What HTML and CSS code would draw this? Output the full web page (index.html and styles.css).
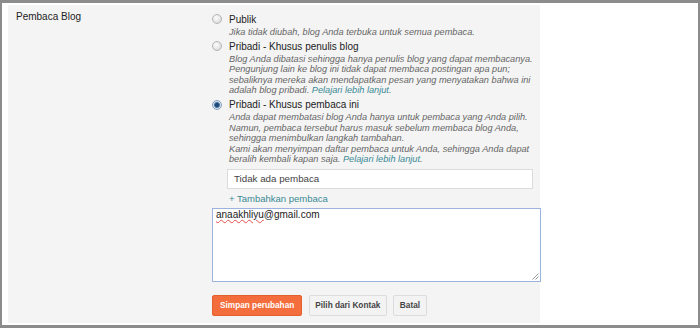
FILE: index.html
```html
<!DOCTYPE html>
<html lang="id">
<head>
<meta charset="utf-8">
<title>Pembaca Blog</title>
<link rel="stylesheet" href="styles.css">
</head>
<body>
<div class="frame">
  <div class="panel">
    <div class="field-label">Pembaca Blog</div>
    <div class="field-body">
      <div class="option">
        <span class="radio"></span>
        <div class="opt-text">
          <div class="opt-title">Publik</div>
          <div class="opt-desc">Jika tidak diubah, blog Anda terbuka untuk semua pembaca.</div>
        </div>
      </div>
      <div class="option">
        <span class="radio"></span>
        <div class="opt-text">
          <div class="opt-title">Pribadi - Khusus penulis blog</div>
          <div class="opt-desc">Blog Anda dibatasi sehingga hanya penulis blog yang dapat membacanya.<br>Pengunjung lain ke blog ini tidak dapat membaca postingan apa pun;<br>sebaliknya mereka akan mendapatkan pesan yang menyatakan bahwa ini<br>adalah blog pribadi. <a class="link" href="#">Pelajari lebih lanjut</a>.</div>
        </div>
      </div>
      <div class="option">
        <span class="radio checked"></span>
        <div class="opt-text">
          <div class="opt-title">Pribadi - Khusus pembaca ini</div>
          <div class="opt-desc">Anda dapat membatasi blog Anda hanya untuk pembaca yang Anda pilih.<br>Namun, pembaca tersebut harus masuk sebelum membaca blog Anda,<br>sehingga menimbulkan langkah tambahan.<br>Kami akan menyimpan daftar pembaca untuk Anda, sehingga Anda dapat<br>beralih kembali kapan saja. <a class="link" href="#">Pelajari lebih lanjut</a>.</div>
        </div>
      </div>
      <div class="picker">
        <div class="reader-box">Tidak ada pembaca</div>
        <a class="add-link" href="#">+ Tambahkan pembaca</a>
      </div>
      <div class="textarea"><span class="misspelled">anaakhliyu</span>@gmail.com<svg class="grip" width="7" height="7" viewBox="0 0 7 7"><path d="M6.5 0.5 L0.5 6.5 M6.5 3.5 L3.5 6.5" stroke="#9a9a9a" stroke-width="1" fill="none"/></svg></div>
      <div class="actions">
        <button class="btn btn-primary" type="button">Simpan perubahan</button>
        <button class="btn" type="button">Pilih dari Kontak</button>
        <button class="btn" type="button">Batal</button>
      </div>
    </div>
  </div>
</div>
</body>
</html>
```

FILE: styles.css
```css
html, body {
  margin: 0;
  padding: 0;
  background: #ffffff;
}

body {
  font-family: "Liberation Sans", Arial, sans-serif;
  color: #222222;
}

.frame {
  box-sizing: border-box;
  width: 700px;
  height: 328px;
  border-style: solid;
  border-color: #8c8c8c;
  border-width: 3px 2px 3px 2px;
  padding: 2px 0 2px 6px;
  background: #ffffff;
}

.panel {
  display: flex;
  width: 532px;
  height: 318px;
  background: #f4f4f4;
}

.field-label {
  width: 196px;
  flex: none;
  padding: 5px 0 0 8px;
  font-size: 10px;
  line-height: 13px;
  color: #222222;
}

.field-body {
  flex: 1;
  padding-top: 7.5px;
  min-width: 0;
}

.option {
  display: flex;
  align-items: flex-start;
  margin-bottom: 2.5px;
}

.radio {
  flex: none;
  box-sizing: border-box;
  width: 10px;
  height: 10px;
  margin-top: 1.5px;
  margin-right: 7px;
  border-radius: 50%;
  border: 1px solid #b4b4b4;
  background: radial-gradient(circle at 40% 35%, #fdfdfd 0, #e6e6e6 55%, #d2d2d2 100%);
}

.radio.checked {
  border-color: #8aa2bb;
  background: radial-gradient(circle at 50% 50%, #1d4a78 0, #1d4a78 30%, #4f7da6 45%, #cfdceb 60%, #e9eff6 100%);
}

.opt-title {
  font-size: 10px;
  line-height: 13px;
  color: #222222;
}

.opt-desc {
  margin-top: 1px;
  font-size: 9.2px;
  line-height: 10.5px;
  font-style: italic;
  color: #666666;
  white-space: nowrap;
}

.link {
  color: #3a8a94;
  text-decoration: none;
}

.picker {
  margin-left: 15px;
  padding-top: 1.5px;
}

.reader-box {
  box-sizing: border-box;
  width: 306px;
  height: 20px;
  padding: 0 6px;
  background: #ffffff;
  border: 1px solid #dcdcdc;
  font-size: 9.75px;
  line-height: 18px;
  color: #444444;
}

.add-link {
  display: block;
  margin-top: 3.5px;
  padding-left: 2px;
  font-size: 9.5px;
  line-height: 13px;
  color: #3a8a94;
  text-decoration: none;
}

.textarea {
  position: relative;
  box-sizing: border-box;
  width: 329px;
  height: 74px;
  margin-top: 3px;
  padding: 0 3px;
  background: #ffffff;
  border: 1px solid #9bb3de;
  font-size: 10px;
  line-height: 12px;
  color: #222222;
}

.misspelled {
  text-decoration: underline wavy #e05050;
  text-decoration-thickness: 1px;
  text-underline-offset: 1px;
}

.grip {
  position: absolute;
  right: 1px;
  bottom: 1px;
}

.actions {
  display: flex;
  gap: 6.5px;
  margin-top: 13px;
}

.btn {
  box-sizing: border-box;
  height: 21px;
  margin: 0;
  padding: 0 5.5px;
  border: 1px solid #dcdcdc;
  border-radius: 2px;
  background: #f3f3f3;
  font-family: "Liberation Sans", Arial, sans-serif;
  font-size: 8.25px;
  font-weight: bold;
  color: #444444;
}

.btn-primary {
  padding: 0 7px;
  background: #f36d3d;
  border-color: #e3602f;
  color: #ffffff;
}
```
